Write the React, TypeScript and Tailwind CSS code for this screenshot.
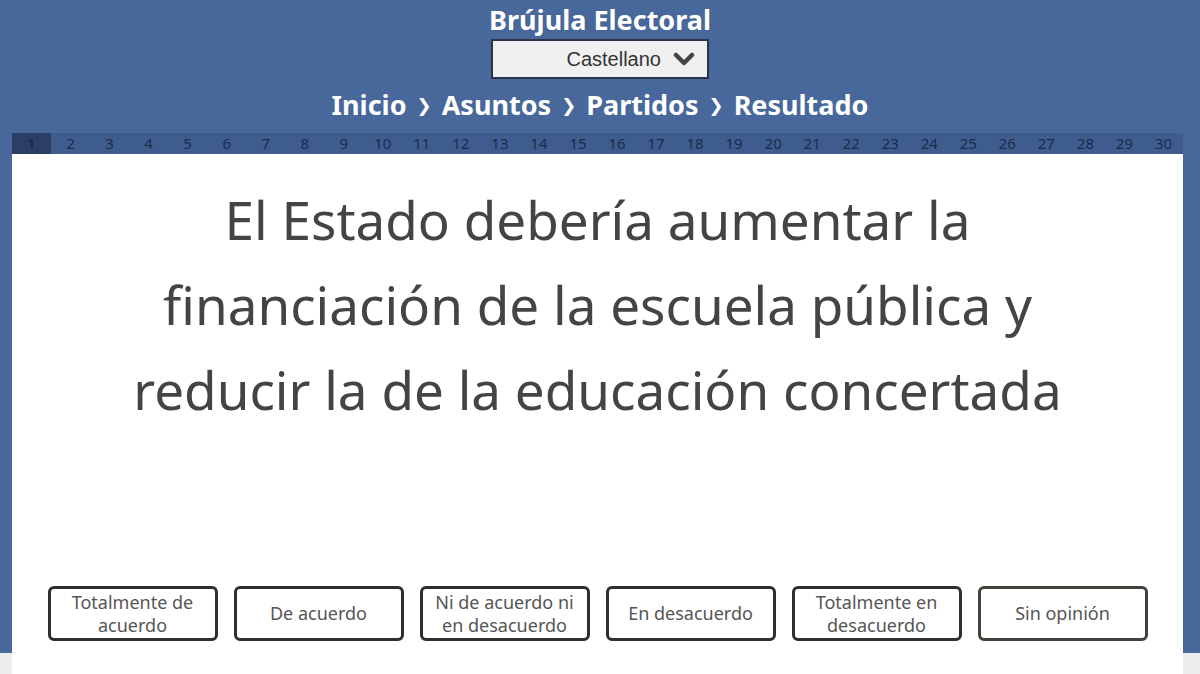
import React, { useState } from 'react';

const ANSWERS = [
  'Totalmente de acuerdo',
  'De acuerdo',
  'Ni de acuerdo ni en desacuerdo',
  'En desacuerdo',
  'Totalmente en desacuerdo',
  'Sin opinión',
];

const STEPS = ['Inicio', 'Asuntos', 'Partidos', 'Resultado'];

const QUESTIONS = Array.from({ length: 30 }, (_, i) => i + 1);

function Chevron() {
  return (
    <svg width="22" height="16" viewBox="0 0 22 16" className="shrink-0">
      <polyline points="3,4 11,12 19,4" fill="none" stroke="#444" strokeWidth="4.5" strokeLinecap="round" strokeLinejoin="round" />
    </svg>
  );
}

export default function App() {
  const [current, setCurrent] = useState(1);
  const [lang] = useState('Castellano');

  return (
    <div
      className="h-[674px] overflow-hidden bg-[linear-gradient(#48689b_653px,#ececec_653px)]"
      style={{ fontFamily: '"Noto Sans", "Open Sans", sans-serif' }}
    >
      {/* Header */}
      <header className="flex flex-col items-center pt-[2px]">
        <h1 className="text-[27px] font-bold leading-[35px] text-white">Brújula Electoral</h1>
        <button className="mt-[2px] flex h-[40px] w-[218px] items-center justify-end gap-[12px] border-2 border-[#2a3444] bg-[#f0f0f0] pr-[12px]">
          <span className="font-['Liberation_Sans',Arial,sans-serif] text-[20px] text-[#333]">{lang}</span>
          <Chevron />
        </button>
        <nav className="mt-[7px] flex h-[38px] items-center gap-[10px] text-[27px] font-bold text-white">
          {STEPS.map((step, i) => (
            <React.Fragment key={step}>
              {i > 0 && <span className="font-['DejaVu_Sans',sans-serif] text-[18px]">❯</span>}
              <span>{step}</span>
            </React.Fragment>
          ))}
        </nav>
      </header>

      {/* Question index */}
      <div className="ml-[12px] mr-[17px] mt-[9px] grid h-[21px] grid-cols-30 bg-[#3e5c8e]">
        {QUESTIONS.map((n) => (
          <button
            key={n}
            onClick={() => setCurrent(n)}
            className={`flex items-center justify-center text-[15px] leading-none ${
              n === current ? 'bg-[#2b3f64] text-[#17243c]' : 'text-[#1c2b4a]'
            }`}
          >
            {n}
          </button>
        ))}
      </div>

      {/* Question card */}
      <main className="ml-[12px] mr-[17px] flex h-[600px] flex-col items-center bg-white">
        <h2 className="mt-[23px] w-[950px] text-center text-[53px] leading-[85px] text-[#444]">
          El Estado debería aumentar la financiación de la escuela pública y reducir la de la educación concertada
        </h2>
        <div className="mt-[154px] flex gap-[16px]">
          {ANSWERS.map((a, i) => (
            <button
              key={a}
              className={`flex h-[55px] w-[170px] items-center justify-center rounded-[6px] border-[3px] bg-white px-[10px] text-center text-[18px] leading-[23px] text-[#555] ${
                i === ANSWERS.length - 1 ? 'border-[#45403a]' : 'border-[#2e2e2e]'
              }`}
            >
              {a}
            </button>
          ))}
        </div>
      </main>
    </div>
  );
}
